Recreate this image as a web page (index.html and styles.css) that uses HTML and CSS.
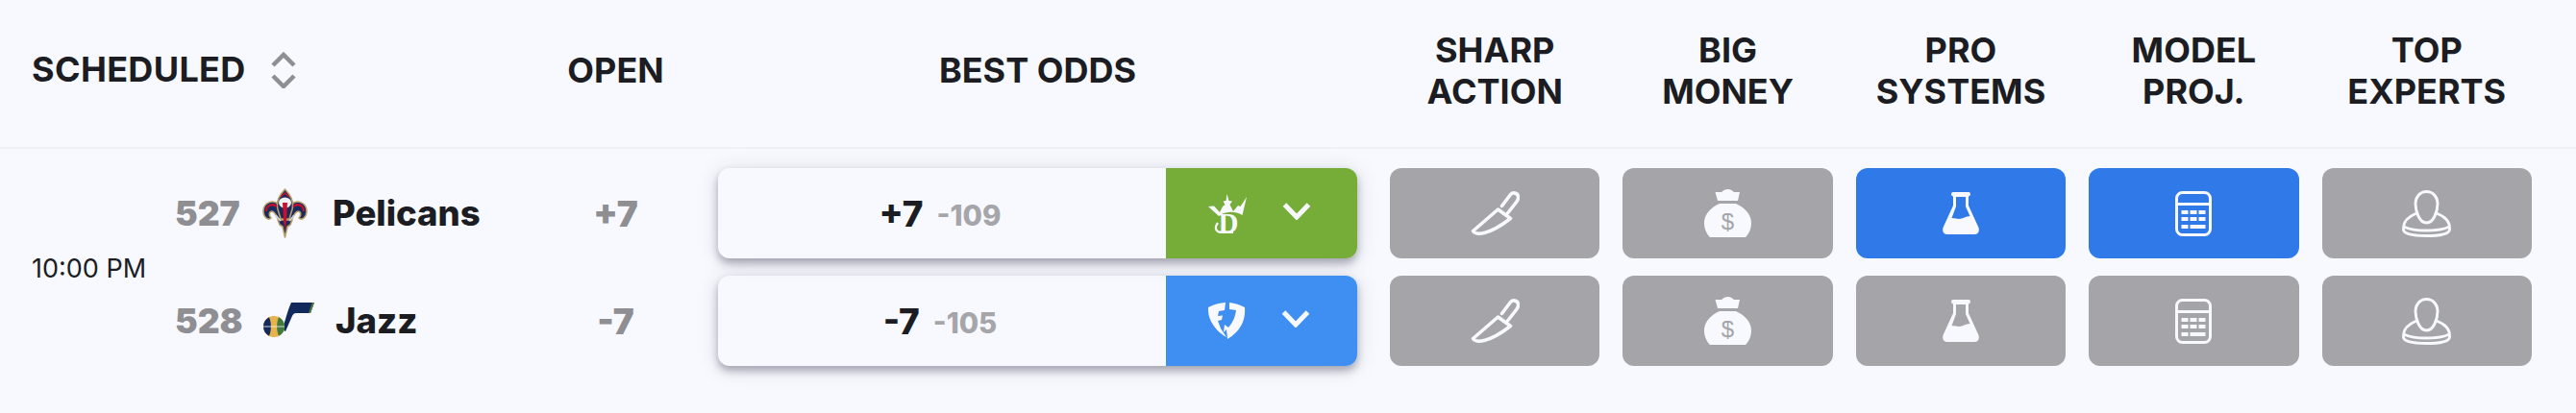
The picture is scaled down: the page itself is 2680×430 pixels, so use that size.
FILE: index.html
```html
<!DOCTYPE html>
<html lang="en">
<head>
<meta charset="utf-8">
<title>Odds</title>
<link rel="stylesheet" href="styles.css">
</head>
<body>
<svg class="defs" width="0" height="0" aria-hidden="true">
  <defs>
    <symbol id="knife" viewBox="0 0 51 46">
      <path d="M28.500 19 2.500 41.500C5 46 18 46.500 41.500 28.500Z M32.500 15.500 41.500 3.500C44.500 .5 50 2 49.500 7C49.500 9 48.500 10 47.500 11.500L38.500 23" fill="none" stroke="currentColor" stroke-width="3.600" stroke-linejoin="round" stroke-linecap="round"/>
    </symbol>
    <symbol id="bag" viewBox="0 0 49 50">
      <path fill="currentColor" d="M11.500 3H18C20 1 22 0 24.500 0S29 1 31 3H37L35 12H14Z M16 15H33C42 19 49 26 49 35C49 42 46 47 43 50H6C3 47 0 42 0 35C0 26 7 19 16 15Z"/>
      <text class="dollar" x="24.500" y="42" text-anchor="middle">$</text>
    </symbol>
    <symbol id="flask" viewBox="0 0 38 44">
      <path fill="currentColor" fill-rule="evenodd" d="M11 0H27Q29 0 29 2T27 4.500V14L37.500 37Q39 44 33 44H5Q-1 44 .5 37L11 14V4.500Q9 4 9 2T11 0Z M14 5V15L9.500 27C12 27 14 28 17 28C21 28 24 25 28.500 25L24 15V5Z"/>
    </symbol>
    <symbol id="calc" viewBox="0 0 38 47">
      <rect x="1.500" y="1.500" width="35" height="44" rx="6" fill="none" stroke="currentColor" stroke-width="3"/>
      <path fill="currentColor" d="M2 12H36V15H2Z M6.500 20H13.500V24H6.500Z M15.500 20H22.500V24H15.500Z M24.500 20H31.500V24H24.500Z M6.500 27H13.500V31H6.500Z M15.500 27H22.500V31H15.500Z M24.500 27H31.500V31H24.500Z M6.500 35H13.500V39H6.500Z M15.500 35H31.500V39H15.500Z"/>
    </symbol>
    <symbol id="person" viewBox="0 0 51 49">
      <path fill="none" stroke="currentColor" stroke-width="2.900" stroke-linecap="round" d="M25.500 1.500C33 1.500 37 8 37 14C37 22 33 34 25.500 34C18 34 14 22 14 14C14 8 18 1.500 25.500 1.500Z M14 24.500C6 28 1.500 33 1.500 39V41C1.500 46 14 47.500 25.500 47.500C37 47.500 49.500 46 49.500 41V39C49.500 33 45 28 37 24.500 M3 38.500C8 41 14 42 25.500 42C37 42 43 41 48 38.500"/>
    </symbol>
    <symbol id="chev" viewBox="0 0 30 19">
      <path d="M2.500 3 15 16 27.500 3" fill="none" stroke="currentColor" stroke-width="5"/>
    </symbol>
  </defs>
</svg>

<main class="board">
  <header class="grid head">
    <div class="hcell hsort">
      <span>SCHEDULED</span>
      <svg class="sort" viewBox="0 0 26 38" width="26" height="38"><path d="M2 14 13 3 24 14M2 25 13 36 24 25" fill="none" stroke="#8e8e93" stroke-width="4.500"/></svg>
    </div>
    <div class="hcell hcenter">OPEN</div>
    <div class="hcell hcenter hodds">BEST ODDS</div>
    <div class="hcell hcenter">SHARP<br>ACTION</div>
    <div class="hcell hcenter">BIG<br>MONEY</div>
    <div class="hcell hcenter">PRO<br>SYSTEMS</div>
    <div class="hcell hcenter">MODEL<br>PROJ.</div>
    <div class="hcell hcenter">TOP<br>EXPERTS</div>
  </header>

  <section class="grid body">
    <div class="time">10:00 PM</div>

    <div class="team">
      <span class="num">527</span>
      <svg class="logo-pel" viewBox="0 0 47 52" width="47" height="52">
        <g stroke="#b9a06a" stroke-width="1.600" fill="#1b2a5c" stroke-linejoin="round">
          <path d="M30 17C36 11 46 15 46 24C46 30 41 34 38 31C41 28 40 24 37 24C34 24 32 30 29 35L26 30Z"/>
          <path d="M17 17C11 11 1 15 1 24C1 30 6 34 9 31C6 28 7 24 10 24C13 24 15 30 18 35L21 30Z"/>
          <path d="M16 33H31L29 38 26 40 23.500 51 21 40 18 38Z"/>
          <path d="M23.500 1C29 7 33 13 31 22L28 32H19L16 22C14 13 18 7 23.500 1Z"/>
        </g>
        <path fill="none" stroke="#c8102e" stroke-width="2" d="M32 19C37 15 43 18 43 24M15 19C10 15 4 18 4 24"/>
        <path fill="none" stroke="#c8102e" stroke-width="1.500" d="M19 9 23.500 5 28 9"/>
        <ellipse cx="23.500" cy="15" rx="6.500" ry="5.500" fill="#eef0f4"/>
        <path fill="none" stroke="#cfd3dc" stroke-width="1.500" d="M14 28 19 34M33 28 28 34"/>
        <path fill="#c8102e" d="M21 15H26L25 34 23.500 44 22 34Z"/>
      </svg>
      <span class="name">Pelicans</span>
    </div>
    <div class="open">+7</div>
    <div class="odds">
      <div class="odds-val"><b>+7</b><span class="juice">-109</span></div>
      <div class="book dk">
        <svg class="book-logo" viewBox="0 0 40 41" width="40" height="41">
          <path fill="currentColor" d="M0 13 6 12.500 12 19 15 13 17.500 11 15.500 7.500 18.500 7 19.500 0 21.500 7 25 7.500 22.500 11 26 18 31 12 33.500 13 40 3 35.500 22C28 17.500 18 17.500 11 23Z"/>
          <text class="dk-d" x="21" y="39.500" text-anchor="middle">D</text>
          <path fill="none" stroke="currentColor" stroke-width="2.200" d="M10 30C6 35 8 40 14 40H26"/>
        </svg>
        <svg class="chev" width="30" height="19"><use href="#chev"/></svg>
      </div>
    </div>
    <div class="btn"><svg class="i-knife"><use href="#knife"/></svg></div>
    <div class="btn"><svg class="i-bag"><use href="#bag"/></svg></div>
    <div class="btn blue"><svg class="i-flask"><use href="#flask"/></svg></div>
    <div class="btn blue"><svg class="i-calc"><use href="#calc"/></svg></div>
    <div class="btn"><svg class="i-person"><use href="#person"/></svg></div>

    <div class="team">
      <span class="num">528</span>
      <svg class="logo-jazz" viewBox="0 0 53 36" width="53" height="36">
        <path fill="#12295c" d="M29 0H53L49 11H34C32 11 31 12 30 14L23 30 19 28C23 20 25 8 29 0Z"/>
        <path fill="#4f7f3a" d="M51 0H53L49 11H47Z"/>
        <circle cx="11" cy="25" r="11" fill="#e8b34a"/>
        <path fill="#12295c" d="M6 15.200A11 11 0 0 0 6 34.800C8.500 29 8.500 21 6 15.200Z"/>
        <path fill="#3f7a3e" d="M16 15.200A11 11 0 0 1 16 34.800C13.500 29 13.500 21 16 15.200Z"/>
        <path fill="none" stroke="#f7f9fe" stroke-width=".8" d="M0 25H22"/>
      </svg>
      <span class="name name-jazz">Jazz</span>
    </div>
    <div class="open">-7</div>
    <div class="odds">
      <div class="odds-val"><b>-7</b><span class="juice">-105</span></div>
      <div class="book fd">
        <svg class="book-logo" viewBox="0 0 39 38" width="39" height="38">
          <path fill="currentColor" d="M0 5C5 2.500 11 .5 18 0L17 8 11 9 10 14 15 13.500 14 18 10 19 13 27 19 36C8 30-1 18 0 5Z M22 0C28 .5 33 2.500 38 5C39 17 35 29 20 38L19 28 16 31 17 23 21 26C26 20 28 15 29 8L22 7Z"/>
        </svg>
        <svg class="chev" width="30" height="19"><use href="#chev"/></svg>
      </div>
    </div>
    <div class="btn"><svg class="i-knife"><use href="#knife"/></svg></div>
    <div class="btn"><svg class="i-bag"><use href="#bag"/></svg></div>
    <div class="btn"><svg class="i-flask"><use href="#flask"/></svg></div>
    <div class="btn"><svg class="i-calc"><use href="#calc"/></svg></div>
    <div class="btn"><svg class="i-person"><use href="#person"/></svg></div>
  </section>
</main>
</body>
</html>
```
FILE: styles.css
```css
* { box-sizing: border-box; }
html, body { margin: 0; height: 100%; }
body {
  background: #f7f9fe;
  color: #1c1d22;
  font-family: Inter, "Liberation Sans", sans-serif;
}
.defs { position: absolute; }
.grid {
  display: grid;
  grid-template-columns: 124px 352px 165px 675px repeat(5, 218.4px);
  column-gap: 24px;
  padding: 0 46px 0 34px;
}
.head {
  height: 155px;
  padding-bottom: 6px;
  align-items: center;
  border-bottom: 2px solid #eff0f5;
}
.hcell {
  font-size: 36px;
  font-weight: 700;
  line-height: 43px;
  white-space: nowrap;
}
.hsort {
  grid-column: span 2;
  display: flex;
  align-items: center;
  gap: 26px;
  margin: -3px 0 0 -1px;
  letter-spacing: .35px;
}
.sort { margin-top: 2px; }
.hcenter { text-align: center; }
.hodds { padding-right: 10px; }

.body {
  grid-template-rows: 94px 94px;
  row-gap: 18px;
  padding-top: 20px;
  align-items: stretch;
}
.time {
  grid-row: 1 / span 2;
  align-self: center;
  font-size: 27px;
  white-space: nowrap;
  padding-top: 2px;
  margin-left: -1px;
}
.team {
  display: flex;
  align-items: center;
  font-weight: 800;
  font-size: 36.500px;
}
.num { color: #8e8e93; width: 91px; flex: none; font-size: 35.500px; font-weight: 900; }
.logo-pel { flex: none; margin-right: 26px; }
.logo-jazz { flex: none; margin: 0 22px 0 1px; position: relative; top: -1px; }
.open {
  display: flex;
  align-items: center;
  justify-content: center;
  font-size: 37px;
  font-weight: 900;
  color: #8e8e93;
}
.odds {
  width: 665px;
  display: flex;
  border-radius: 12px;
  box-shadow: 0 5px 8px rgba(50, 50, 70, .38), 0 2px 24px rgba(50, 50, 70, .12);
}
.odds-val {
  flex: 1;
  display: flex;
  align-items: center;
  justify-content: center;
  gap: 14px;
  padding-right: 4px;
  font-size: 37px;
  font-weight: 800;
}
.odds-val b { font-weight: 800; }
.juice { color: #a5a5aa; font-size: 29.500px; font-weight: 800; position: relative; top: 2px; }
.book {
  width: 199px;
  flex: none;
  display: flex;
  align-items: center;
  color: #f7f9fe;
  padding-left: 44px;
  gap: 37px;
  border-radius: 0 12px 12px 0;
}
.book-logo { flex: none; }
.chev { flex: none; position: relative; top: -3px; }
.dk { background: #76ad38; }
.fd { background: #3f8ff2; }
.dk-d { font: 700 29px "Liberation Serif", serif; fill: #f7f9fe; }
.dollar { font: 400 24px "Liberation Sans", sans-serif; fill: #a5a5a9; }
.btn {
  display: flex;
  align-items: center;
  justify-content: center;
  background: #a5a5a9;
  color: #f7f9fe;
  border-radius: 12px;
}
.btn.blue { background: #2f7ae8; }
.i-knife { width: 51px; height: 46px; }
.i-bag { width: 49px; height: 50px; }
.i-flask { width: 38px; height: 44px; }
.i-calc { width: 38px; height: 47px; }
.i-person { width: 51px; height: 49px; }
```
